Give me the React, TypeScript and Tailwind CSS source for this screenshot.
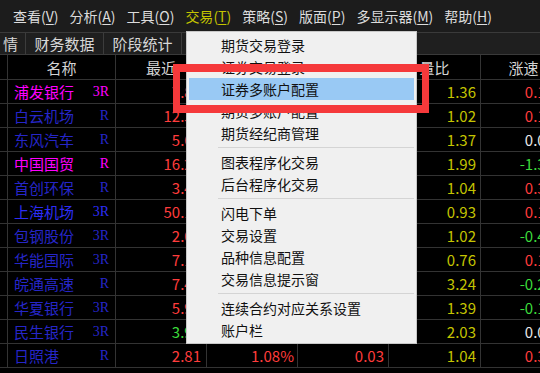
import React from 'react';

type Row = {
  name: string;
  tag: string;
  color: string;
  last: string;
  lastColor: string;
  pct: string;
  chg: string;
  ratio: string;
  speed: string;
  speedColor: string;
};

const RED = 'text-[#ff3c3c]';
const GREEN = 'text-[#3cdc3c]';
const WHITE = 'text-[#e8e8e8]';

const rows: Row[] = [
  { name: '浦发银行', tag: '3R', color: 'text-[#ff00ff]', last: '7.85', lastColor: RED, pct: '0.77%', chg: '0.06', ratio: '1.36', speed: '0.12', speedColor: RED },
  { name: '白云机场', tag: 'R', color: 'text-[#2626c8]', last: '12.35', lastColor: RED, pct: '1.23%', chg: '0.15', ratio: '1.02', speed: '0.16', speedColor: RED },
  { name: '东风汽车', tag: 'R', color: 'text-[#2626c8]', last: '5.62', lastColor: RED, pct: '0.54%', chg: '0.03', ratio: '1.37', speed: '0.00', speedColor: WHITE },
  { name: '中国国贸', tag: 'R', color: 'text-[#ff00ff]', last: '16.20', lastColor: RED, pct: '2.01%', chg: '0.32', ratio: '1.99', speed: '-1.35', speedColor: GREEN },
  { name: '首创环保', tag: 'R', color: 'text-[#2626c8]', last: '3.41', lastColor: RED, pct: '0.89%', chg: '0.03', ratio: '1.04', speed: '0.30', speedColor: RED },
  { name: '上海机场', tag: '3R', color: 'text-[#2d2df5]', last: '50.12', lastColor: RED, pct: '1.45%', chg: '0.72', ratio: '0.93', speed: '0.14', speedColor: RED },
  { name: '包钢股份', tag: '3R', color: 'text-[#2626c8]', last: '2.05', lastColor: RED, pct: '0.49%', chg: '0.01', ratio: '1.02', speed: '-0.49', speedColor: GREEN },
  { name: '华能国际', tag: '3R', color: 'text-[#2626c8]', last: '7.10', lastColor: RED, pct: '0.85%', chg: '0.06', ratio: '0.76', speed: '0.14', speedColor: RED },
  { name: '皖通高速', tag: 'R', color: 'text-[#2626c8]', last: '7.45', lastColor: RED, pct: '0.68%', chg: '0.05', ratio: '3.24', speed: '-0.27', speedColor: GREEN },
  { name: '华夏银行', tag: '3R', color: 'text-[#2626c8]', last: '5.98', lastColor: RED, pct: '0.34%', chg: '0.02', ratio: '1.39', speed: '-0.17', speedColor: GREEN },
  { name: '民生银行', tag: '3R', color: 'text-[#2626c8]', last: '3.92', lastColor: GREEN, pct: '-0.25%', chg: '-0.01', ratio: '2.03', speed: '0.00', speedColor: WHITE },
  { name: '日照港', tag: 'R', color: 'text-[#2626c8]', last: '2.81', lastColor: RED, pct: '1.08%', chg: '0.03', ratio: '1.04', speed: '0.36', speedColor: RED },
];

const menus = [
  { label: '查看', key: 'V' },
  { label: '分析', key: 'A' },
  { label: '工具', key: 'O' },
  { label: '交易', key: 'T', active: true },
  { label: '策略', key: 'S' },
  { label: '版面', key: 'P' },
  { label: '多显示器', key: 'M' },
  { label: '帮助', key: 'H' },
];

const tradeMenu: (string | null)[] = [
  '期货交易登录',
  '证券交易登录',
  '证券多账户配置',
  '期货多账户配置',
  '期货经纪商管理',
  null,
  '图表程序化交易',
  '后台程序化交易',
  null,
  '闪电下单',
  '交易设置',
  '品种信息配置',
  '交易信息提示窗',
  null,
  '连续合约对应关系设置',
  '账户栏',
];

const Cell: React.FC<{ w: string; className?: string; children?: React.ReactNode }> = ({ w, className = '', children }) => (
  <div className={`${w} shrink-0 h-full border-r border-[#333333] flex items-center ${className}`}>{children}</div>
);

export default function App() {
  return (
    <div
      className="relative w-[540px] h-[373px] overflow-hidden bg-black select-none"
      style={{ fontFamily: '"Noto Sans CJK SC", "Liberation Sans", sans-serif' }}
    >
      {/* menu bar */}
      <div className="h-[32px] bg-[#1c1c1c] flex items-center pl-[13px] gap-[11px] text-[14px] leading-none text-[#dcdcdc]">
        {menus.map((m) => (
          <span key={m.key} className={m.active ? 'text-[#c4c400]' : ''}>
            {m.label}(<span className="underline underline-offset-2">{m.key}</span>)
          </span>
        ))}
      </div>

      {/* tab bar */}
      <div className="h-[23px] bg-[#1f1f1f] border-t border-[#2c2c2c] border-b border-[#3a3a3a] flex text-[15px] leading-none text-[#d8d8d8]">
        <div className="w-[26px] pl-[3px] border-r border-[#3c3c3c] flex items-center">情</div>
        <div className="w-[78px] border-r border-[#3c3c3c] flex items-center justify-center">财务数据</div>
        <div className="w-[78px] border-r border-[#3c3c3c] flex items-center justify-center">阶段统计</div>
      </div>

      {/* table */}
      <div className="text-[15px] leading-none">
        <div className="h-[25px] flex border-b border-[#333333] text-[#d4d4d4]">
          <Cell w="w-[8px]" />
          <Cell w="w-[108px]" className="justify-center">名称</Cell>
          <Cell w="w-[91px]" className="justify-center">最近</Cell>
          <Cell w="w-[91px]" className="justify-center">涨幅</Cell>
          <Cell w="w-[91px]" className="justify-center">涨跌</Cell>
          <Cell w="w-[92px]" className="justify-center">量比</Cell>
          <Cell w="w-[86px]" className="justify-center">涨速</Cell>
        </div>
        {rows.map((r) => (
          <div key={r.name} className="h-[24px] flex border-b border-[#333333]">
            <Cell w="w-[8px]" />
            <Cell w="w-[108px]" className="pl-[6px] pr-[6px] justify-between">
              <span className={r.color}>{r.name}</span>
              <span className={`${r.color} text-[14px]`} style={{ fontFamily: '"Liberation Serif", serif' }}>
                {r.tag}
              </span>
            </Cell>
            <Cell w="w-[91px]" className={`justify-end pr-[5px] ${r.lastColor}`}>{r.last}</Cell>
            <Cell w="w-[91px]" className={`justify-end pr-[3px] ${r.lastColor}`}>{r.pct}</Cell>
            <Cell w="w-[91px]" className={`justify-end pr-[4px] ${r.lastColor}`}>{r.chg}</Cell>
            <Cell w="w-[92px]" className="justify-end pr-[4px] text-[#c4c400]">{r.ratio}</Cell>
            <Cell w="w-[86px]" className={`justify-end pr-[12px] ${r.speedColor}`}>{r.speed}</Cell>
          </div>
        ))}
      </div>

      {/* dropdown menu */}
      <div className="absolute left-[186px] top-[31px] w-[231px] bg-[#f0f0f0] border border-[#c8c8c8] py-[2px] px-[2px] text-[14px] leading-none text-[#111111]">
        {tradeMenu.map((item, i) =>
          item === null ? (
            <div key={i} className="h-[7px] flex items-center pl-[29px]">
              <div className="h-px w-full bg-[#d4d4d4]" />
            </div>
          ) : (
            <div
              key={i}
              className={`h-[22px] flex items-center pl-[32px] ${item === '证券多账户配置' ? 'bg-[#99c9f4]' : ''}`}
            >
              {item}
            </div>
          )
        )}
      </div>

      {/* red annotation box */}
      <div className="absolute left-[173px] top-[64px] w-[256px] h-[49px] border-x-[7px] border-y-[8px] border-[#f5393b]" />
    </div>
  );
}
